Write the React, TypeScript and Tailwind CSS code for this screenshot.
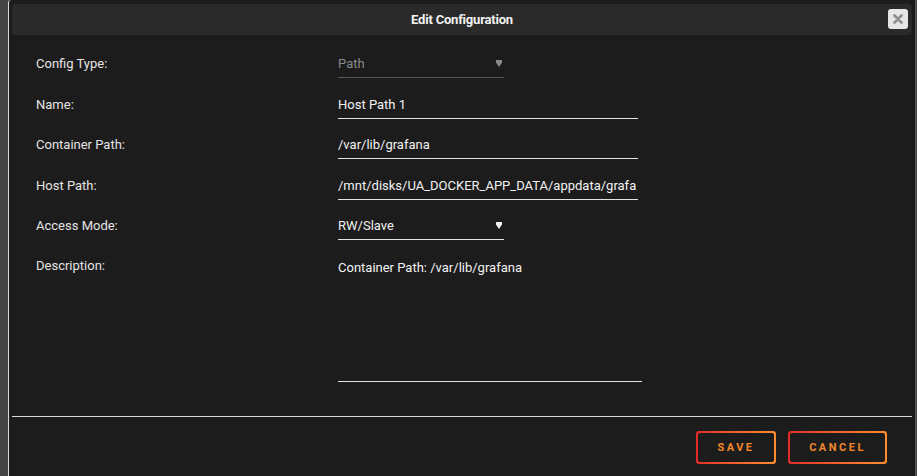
import React from 'react';

const FONT = { fontFamily: 'Roboto, "Noto Sans", "Liberation Sans", sans-serif' };

function Caret({ muted }: { muted?: boolean }) {
  return (
    <svg width="6" height="7" viewBox="0 0 6 7" className={muted ? 'text-[#8a8a8a]' : 'text-[#f0f0f0]'}>
      <path d="M0 0 H6 V2.5 L3 7 L0 2.5 Z" fill="currentColor" />
    </svg>
  );
}

function Row({ label, children, className }: { label: string; children: React.ReactNode; className?: string }) {
  return (
    <div className={`flex items-start ${className ?? ''}`}>
      <div className="w-[302px] shrink-0 h-[28px] flex items-center text-[13px] text-[#e4e4e4]">{label}</div>
      {children}
    </div>
  );
}

function TextField({ value }: { value: string }) {
  return (
    <div className="w-[300px] h-[28px] border-b border-[#e2e2e2] flex items-center overflow-hidden whitespace-nowrap text-[13px] text-[#f2f2f2]">
      {value}
    </div>
  );
}

function SelectField({ value, muted }: { value: string; muted?: boolean }) {
  return (
    <div
      className={`w-[166px] h-[28px] border-b flex items-center justify-between pr-[2px] text-[13px] ${
        muted ? 'border-[#555555] text-[#8a8a8a]' : 'border-[#e2e2e2] text-[#f2f2f2]'
      }`}
    >
      <span>{value}</span>
      <Caret muted={muted} />
    </div>
  );
}

function GradientButton({ label, width }: { label: string; width: string }) {
  return (
    <div className={`${width} h-[33px] rounded-[3px] p-[2px] bg-gradient-to-r from-[#e22828] to-[#ff8c2f]`}>
      <div className="w-full h-full rounded-[2px] bg-[#1c1c1c] flex items-center justify-center pt-[1px] text-[11px] font-bold tracking-[2.5px] text-[#f2872b]">
        {label}
      </div>
    </div>
  );
}

export default function App() {
  return (
    <div className="h-[476px] w-[917px] bg-[#444444] overflow-hidden flex" style={FONT}>
      <div className="ml-[8px] w-[908px] h-full bg-[#1c1c1c] border-l border-[#d8d8d8] border-r border-r-[#5a5a5a] rounded-tl-[3px] px-[3px] pt-[4px] flex flex-col">
        {/* Title bar */}
        <div className="relative h-[31px] bg-[#2a2a2a] rounded-[4px] flex items-center justify-center">
          <span className="text-[13px] font-bold text-[#f2f2f2] tracking-[-0.2px]">Edit Configuration</span>
          <div className="absolute right-[4px] top-[5px] w-[20px] h-[20px] rounded-[3px] bg-[#e6e6e6] flex items-center justify-center">
            <svg width="10" height="10" viewBox="0 0 10 10">
              <path d="M1.5 1.5 L8.5 8.5 M8.5 1.5 L1.5 8.5" stroke="#8c8c8c" strokeWidth="2.6" strokeLinecap="round" />
            </svg>
          </div>
        </div>

        {/* Form */}
        <div className="pl-[24px] pt-[15px] flex flex-col">
          <Row label="Config Type:">
            <SelectField value="Path" muted />
          </Row>
          <Row label="Name:" className="mt-[13px]">
            <TextField value="Host Path 1" />
          </Row>
          <Row label="Container Path:" className="mt-[12px]">
            <TextField value="/var/lib/grafana" />
          </Row>
          <Row label="Host Path:" className="mt-[13px]">
            <TextField value="/mnt/disks/UA_DOCKER_APP_DATA/appdata/grafa" />
          </Row>
          <Row label="Access Mode:" className="mt-[12px]">
            <SelectField value="RW/Slave" />
          </Row>
          <Row label="Description:" className="mt-[12px]">
            <div className="w-[304px] h-[130px] border-b border-[#e2e2e2] pt-[6px] text-[13px] text-[#f2f2f2]">
              Container Path: /var/lib/grafana
            </div>
          </Row>
        </div>

        {/* Footer */}
        <div className="mt-[34px] border-t border-[#dcdcdc] flex justify-end gap-[12px] pt-[14px] pr-[25px]">
          <GradientButton label="SAVE" width="w-[80px]" />
          <GradientButton label="CANCEL" width="w-[99px]" />
        </div>
      </div>
    </div>
  );
}
